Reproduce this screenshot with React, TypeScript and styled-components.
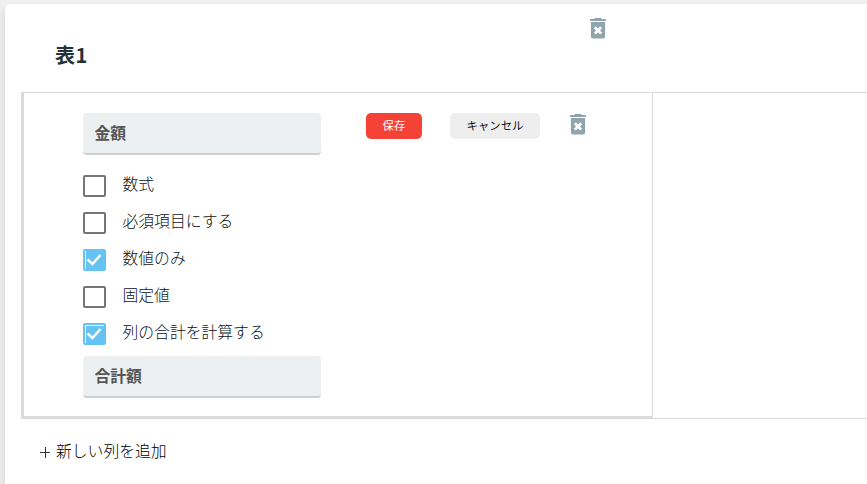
import React from 'react';
import styled, { createGlobalStyle, css } from 'styled-components';

const Global = createGlobalStyle`
  * { box-sizing: border-box; }
  html, body { margin: 0; height: 484px; overflow: hidden; background: #efefef; }
  body, input, button {
    font-family: "Noto Sans CJK JP", "Noto Sans", sans-serif;
    font-size: 15.8px;
    color: #263238;
  }
`;

const Page = styled.main`
  padding: 4px 0 0 5px;
  height: 484px;
  overflow: hidden;
`;

const Card = styled.section`
  height: 560px;
  background: #fff;
  border-radius: 5px 0 0 0;
  box-shadow: 0 6px 10px rgba(0, 0, 0, 0.12);
  padding-left: 16px;
`;

const CardHeader = styled.header`
  display: flex;
  align-items: flex-start;
  height: 88px;
`;

const Title = styled.h2`
  margin: 0;
  padding: 36px 0 0 34px;
  width: 565px;
  font-size: 20px;
  line-height: 29px;
  font-weight: 700;
  letter-spacing: 0.5px;
`;

const IconButton = styled.button<{ $top: number }>`
  display: block;
  border: 0;
  padding: 0;
  margin-top: ${p => p.$top}px;
  background: none;
  width: 24px;
  height: 24px;
  svg { display: block; }
`;

const Table = styled.div`
  display: flex;
  height: 327px;
  border-top: 1px solid #dbdbdb;
`;

const EditCell = styled.div`
  display: flex;
  align-items: flex-start;
  width: 631px;
  padding: 20px 0 0 59px;
  border-left: 3px solid #dbdbdb;
  border-bottom: 3px solid #dbdbdb;
`;

const EmptyCell = styled.div`
  flex: 1;
  border-left: 1px solid #dbdbdb;
  border-bottom: 1px solid #dbdbdb;
`;

const Fields = styled.div`
  width: 238px;
  margin-right: 45px;
`;

const TextInput = styled.input`
  display: block;
  width: 238px;
  height: 42px;
  padding: 0 12px 1px 11.5px;
  border: 0;
  border-bottom: 2px solid #cccfd0;
  border-radius: 4px;
  outline: 0;
  background: #ecf0f1;
  color: #555;
  font-weight: 700;
`;

const Options = styled.div`
  padding-top: 16px;
  height: 201px;
`;

const Option = styled.label`
  display: flex;
  align-items: flex-start;
  height: 36.9px;
  padding-top: 4px;
`;

const Box = styled.span<{ $on?: boolean }>`
  width: 23px;
  height: 22px;
  border: 2px solid #757575;
  border-radius: 2px;
  ${p => p.$on && css`
    border-color: #64c3f2;
    background: #64c3f2;
  `}
  svg { display: block; margin: -2px; }
`;

const OptionText = styled.span`
  margin: -3px 0 0 16.5px;
  line-height: 24px;
  font-weight: 300;
  color: #0b1418;
`;

const Button = styled.button<{ $primary?: boolean }>`
  width: ${p => (p.$primary ? 56 : 90)}px;
  height: 26px;
  margin-right: ${p => (p.$primary ? 28 : 26)}px;
  padding: 0 0 2px;
  border: 0;
  border-radius: 5px;
  font-size: 11.4px;
  line-height: 24px;
  white-space: nowrap;
  background: ${p => (p.$primary ? '#f44336' : '#eeeeee')};
  color: ${p => (p.$primary ? '#fff' : '#111')};
`;

const AddColumn = styled.button`
  display: flex;
  align-items: center;
  gap: 6px;
  margin: 20px 0 0 19px;
  padding: 0;
  border: 0;
  background: none;
  color: #000;
  font-weight: 300;
  line-height: 24px;
  svg { margin-top: 3px; }
`;

const Trash = () => (
  <svg width="24" height="24" viewBox="0 0 24 24">
    <path fill="#90a4ae" d="M8 2L9 1h6l1 1h3.2q.8 0 .8.8V4H4V2.8Q4 2 4.800 2zM4.900 5h14.200V19.500q0 2-2 2h-10.200q-2 0-2-2z" />
    <path d="M8.800 10.200l6.400 6.400M15.200 10.200l-6.400 6.400" stroke="#fff" strokeWidth="2.7" />
  </svg>
);

const Check = ({ top }: { top?: boolean }) => (
  <svg width="23" height="22" viewBox="0 0 23 22">
    <path d="M4.500 10.500l5 4.500 8-9" fill="none" stroke="#fff" strokeWidth="2.4" />
    <path d={top ? 'M2.500 20V2.500H21' : 'M2.500 20V2'} fill="none" stroke="#fff" />
  </svg>
);

const options = [
  { label: '数式' },
  { label: '必須項目にする' },
  { label: '数値のみ', on: true },
  { label: '固定値' },
  { label: '列の合計を計算する', on: true, top: true },
];

export default function App() {
  return (
    <Page>
      <Global />
      <Card>
        <CardHeader>
          <Title>表1</Title>
          <IconButton $top={13} aria-label="表を削除"><Trash /></IconButton>
        </CardHeader>
        <Table>
          <EditCell>
            <Fields>
              <TextInput defaultValue="金額" />
              <Options>
                {options.map(o => (
                  <Option key={o.label}>
                    <Box $on={o.on}>{o.on && <Check top={o.top} />}</Box>
                    <OptionText>{o.label}</OptionText>
                  </Option>
                ))}
              </Options>
              <TextInput defaultValue="合計額" />
            </Fields>
            <Button $primary>保存</Button>
            <Button>キャンセル</Button>
            <IconButton $top={0} aria-label="列を削除"><Trash /></IconButton>
          </EditCell>
          <EmptyCell />
        </Table>
        <AddColumn>
          <svg width="10" height="11" viewBox="0 0 10 11"><path d="M0 5.500h10M5.500 0v11" stroke="#333" /></svg>
          新しい列を追加
        </AddColumn>
      </Card>
    </Page>
  );
}
